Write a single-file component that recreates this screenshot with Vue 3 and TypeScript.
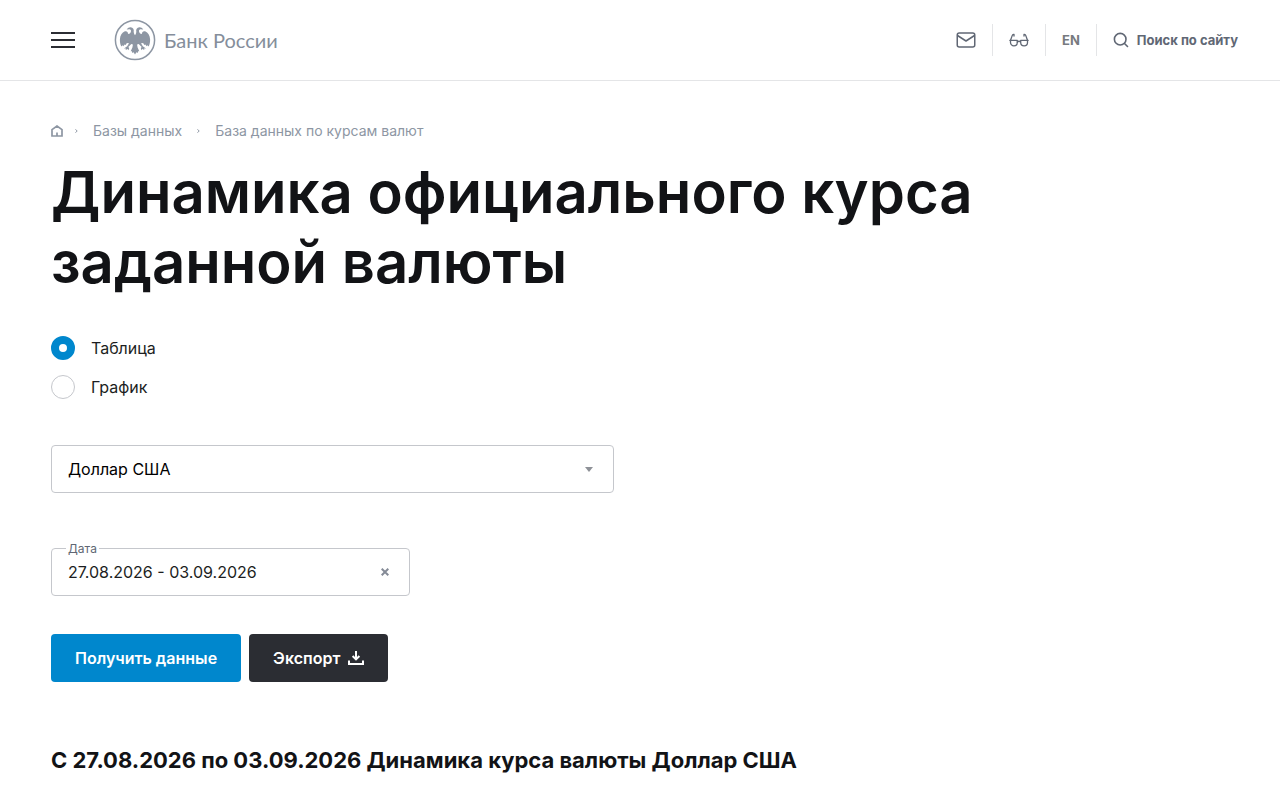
<script setup lang="ts">
import { ref, computed } from 'vue'

const view = ref<'table' | 'chart'>('table')
const views = [
  { value: 'table', label: 'Таблица' },
  { value: 'chart', label: 'График' },
]
const currencies = ['Доллар США', 'Евро', 'Китайский юань']
const currency = ref('Доллар США')
const period = ref('27.08.2026 - 03.09.2026')
const heading = computed(() => {
  const [from, to] = period.value.split(' - ')
  return from && to
    ? `С ${from} по ${to} Динамика курса валюты ${currency.value}`
    : `Динамика курса валюты ${currency.value}`
})

// One half of the eagle; the other half is its mirror image.
const eagleHalf =
  'M21 16.200C20.300 15.600 19.800 14.300 19.700 12.800C20.200 10.500 19.100 8.400 16.600 8.300C15 8.200 13.900 9.100 12.700 10.400L15.700 10.300C17 10.700 17.300 11.800 16.700 13.200C16 14.600 15.200 15.200 14 14.800C14.100 12.900 12.700 11.700 10.900 12.300C7.900 13.500 6.200 16.500 5.900 20.200C5.800 23 6.200 25.300 7.300 27.500L8.600 26.200L9.300 27.300L10.600 25.400L11.600 25.900L12.900 24L15 24.200L13.200 27.200L10 29.500L12 29.400L11.600 31L13.700 30L14.700 31.300L15.200 29L14.300 28.100L17.300 25.100L18.900 25.400L18.400 28.600L16.700 32.300L17.900 32.300L18.300 34.100L19.600 33.300L21 35.500Z'
</script>

<template>
  <div class="page">
    <header class="header">
      <button class="menu" type="button" aria-label="Меню"><span></span><span></span><span></span></button>
      <a class="logo" href="#">
        <svg width="42" height="42" viewBox="0 0 42 42" aria-hidden="true">
          <circle cx="21" cy="21" r="19.6" fill="none" stroke="#8d96a3" stroke-width="1.5" />
          <path fill="#8d96a3" :d="eagleHalf" />
          <path fill="#8d96a3" transform="translate(42 0) scale(-1 1)" :d="eagleHalf" />
        </svg>
        <span>Банк России</span>
      </a>
      <nav class="tools" aria-label="Сервисы">
        <a class="tool" href="#" aria-label="Написать письмо">
          <svg width="20" height="16" viewBox="0 0 20 16" fill="none" stroke="#606774" stroke-width="1.5" stroke-linejoin="round" aria-hidden="true">
            <rect x="1.250" y="1" width="17.500" height="14" rx="2" />
            <path d="M1.500 3.500 10 9l8.500-5.500" />
          </svg>
        </a>
        <a class="tool" href="#" aria-label="Версия для слабовидящих">
          <svg width="20" height="14" viewBox="0 0 20 14" fill="none" stroke="#606774" stroke-width="1.300" stroke-linecap="round" stroke-linejoin="round" aria-hidden="true">
            <path d="M.8 7.300H8.300V9.500a3.400 3.400 0 0 1-6.800 0V7.300L3.200 2.600C3.500 1.600 4 1.300 5 1.500V3" />
            <path d="M19.200 7.300H11.700V9.500a3.400 3.400 0 0 0 6.800 0V7.300L16.800 2.600C16.500 1.600 16 1.300 15 1.500V3M8.300 9c.8-.7 2.600-.7 3.400 0" />
          </svg>
        </a>
        <a class="tool lang" href="#">EN</a>
        <button class="tool search" type="button">
          <svg width="16" height="16" viewBox="0 0 16 16" fill="none" stroke="#606774" stroke-width="1.600" stroke-linecap="round" aria-hidden="true">
            <circle cx="7.200" cy="7.200" r="5.800" />
            <path d="m11.500 11.500 3 3" />
          </svg>
          <span>Поиск по сайту</span>
        </button>
      </nav>
    </header>

    <main class="content">
      <nav class="crumbs" aria-label="Навигационная цепочка">
        <a class="home" href="#" aria-label="Главная">
          <svg width="12" height="12" viewBox="0 0 12 12" fill="none" stroke="#8d96a3" stroke-width="1.700" aria-hidden="true">
            <path d="M1 4.600 6 1l5 3.600V11H1ZM6 7.500V11" />
          </svg>
        </a>
        <svg class="sep" width="3" height="4" viewBox="0 0 3 4" fill="none" stroke="#8d96a3" aria-hidden="true"><path d="m.5.300 1.700 1.700L.5 3.700" /></svg>
        <a href="#">Базы данных</a>
        <svg class="sep" width="3" height="4" viewBox="0 0 3 4" fill="none" stroke="#8d96a3" aria-hidden="true"><path d="m.5.300 1.700 1.700L.5 3.700" /></svg>
        <a href="#">База данных по курсам валют</a>
      </nav>

      <h1>Динамика официального курса заданной валюты</h1>

      <form @submit.prevent>
        <div class="choices" role="radiogroup" aria-label="Вид данных">
          <label v-for="item in views" :key="item.value" class="choice">
            <input v-model="view" type="radio" name="view" :value="item.value" />
            <span>{{ item.label }}</span>
          </label>
        </div>

        <div class="row halves">
          <div class="select">
            <select v-model="currency" aria-label="Валюта">
              <option v-for="name in currencies" :key="name">{{ name }}</option>
            </select>
            <svg class="arrow" width="8" height="5" viewBox="0 0 8 5" aria-hidden="true"><path d="M0 0h8L4 5Z" fill="#8e9197" /></svg>
          </div>
        </div>

        <div class="row thirds">
          <div class="date">
            <label for="period">Дата</label>
            <input id="period" v-model="period" type="text" />
            <button type="button" aria-label="Очистить" @click="period = ''">
              <svg width="8" height="8" viewBox="0 0 8 8" stroke="#858b97" stroke-width="2" aria-hidden="true"><path d="m.7.700 6.600 6.600M7.300.700.700 7.300" /></svg>
            </button>
          </div>
        </div>

        <div class="actions">
          <button class="btn primary" type="submit">Получить данные</button>
          <button class="btn dark" type="button">
            <span>Экспорт</span>
            <svg width="16" height="14" viewBox="0 0 16 14" fill="none" stroke="#fff" stroke-width="2" aria-hidden="true">
              <path d="M8 0v8M4.600 5 8 8.400 11.400 5M1 9.500V13h14V9.500" />
            </svg>
          </button>
        </div>
      </form>

      <h2>{{ heading }}</h2>
    </main>
  </div>
</template>

<style>
body {
  margin: 0;
  background: #fff;
}
</style>

<style scoped>
.page {
  height: 100vh;
  overflow: hidden;
  font-family: Inter, "Noto Sans", sans-serif;
  font-size: 16px;
  line-height: 24px;
  color: #1c1e22;
}
.page *,
.page {
  box-sizing: border-box;
}
a {
  color: inherit;
  text-decoration: none;
}
button,
input,
select {
  font: inherit;
  color: inherit;
  margin: 0;
}
button {
  padding: 0;
  border: 0;
  background: none;
  cursor: pointer;
}
svg {
  display: block;
  flex: none;
}
.header {
  display: flex;
  align-items: center;
  height: 81px;
  padding: 0 42px 1px 51px;
  border-bottom: 1px solid #e4e5e7;
}
.menu {
  display: flex;
  flex-direction: column;
  gap: 5px;
  width: 24px;
}
.menu span {
  height: 2px;
  background: #2b2d33;
}
.logo {
  display: flex;
  align-items: center;
  gap: 8px;
  margin-left: 39px;
  font-family: Lato, "Noto Sans", sans-serif;
  font-size: 20px;
  color: #858e9b;
}
.tools {
  display: flex;
  align-items: center;
  margin-left: auto;
  color: #606774;
  font-size: 13px;
  font-weight: 700;
}
.tool {
  display: flex;
  align-items: center;
  height: 32px;
  padding: 0 16px;
}
.tool + .tool {
  border-left: 1px solid #e4e5e7;
}
.lang {
  color: #777a80;
}
.search {
  gap: 8px;
  padding-right: 0;
}
.content {
  padding: 40px 51px 0;
}
.crumbs {
  display: flex;
  align-items: center;
  height: 20px;
  font-size: 14px;
  line-height: 20px;
  color: #8d96a3;
}
.crumbs .sep {
  margin: 0 15px;
}
.crumbs .home + .sep {
  margin-left: 12px;
}
h1 {
  max-width: 1000px;
  margin: 16px 0 0;
  font-size: 58px;
  line-height: 70px;
  font-weight: 600;
  color: #121316;
}
.choices {
  display: flex;
  flex-direction: column;
  align-items: flex-start;
  gap: 15px;
  margin-top: 39px;
}
.choice {
  display: flex;
  align-items: center;
  gap: 16px;
}
.choice input {
  appearance: none;
  width: 24px;
  height: 24px;
  border: 1px solid #c5c7cc;
  border-radius: 50%;
  background: #fff;
}
.choice input:checked {
  border: 8px solid #0087cd;
}
.row {
  display: grid;
}
.halves {
  grid-template-columns: repeat(2, 1fr);
  column-gap: 52px;
  margin-top: 46px;
}
.thirds {
  grid-template-columns: repeat(3, 1fr);
  column-gap: 51px;
  margin-top: 55px;
}
.select,
.date {
  position: relative;
  height: 48px;
}
.select select,
.date input {
  display: block;
  appearance: none;
  width: 100%;
  height: 48px;
  padding: 0 48px 0 16px;
  border: 1px solid #c5c7cc;
  border-radius: 4px;
  background: #fff;
}
.select select {
  color: #000;
}
.arrow {
  position: absolute;
  top: 22px;
  right: 21px;
  pointer-events: none;
}
.date label {
  position: absolute;
  top: -7px;
  left: 15px;
  padding: 0 2px;
  background: #fff;
  font-size: 12px;
  line-height: 16px;
  color: #606774;
}
.date button {
  position: absolute;
  top: 12px;
  right: 13px;
  display: grid;
  place-items: center;
  width: 24px;
  height: 24px;
}
.actions {
  display: flex;
  gap: 8px;
  margin-top: 38px;
}
.btn {
  display: flex;
  align-items: center;
  gap: 8px;
  height: 48px;
  padding: 0 24px;
  border-radius: 4px;
  color: #fff;
  font-weight: 600;
}
.primary {
  background: #0087cd;
}
.dark {
  background: #2b2d33;
}
h2 {
  margin: 62px 0 0;
  font-size: 22px;
  line-height: 32px;
  font-weight: 700;
  color: #121316;
}
</style>
